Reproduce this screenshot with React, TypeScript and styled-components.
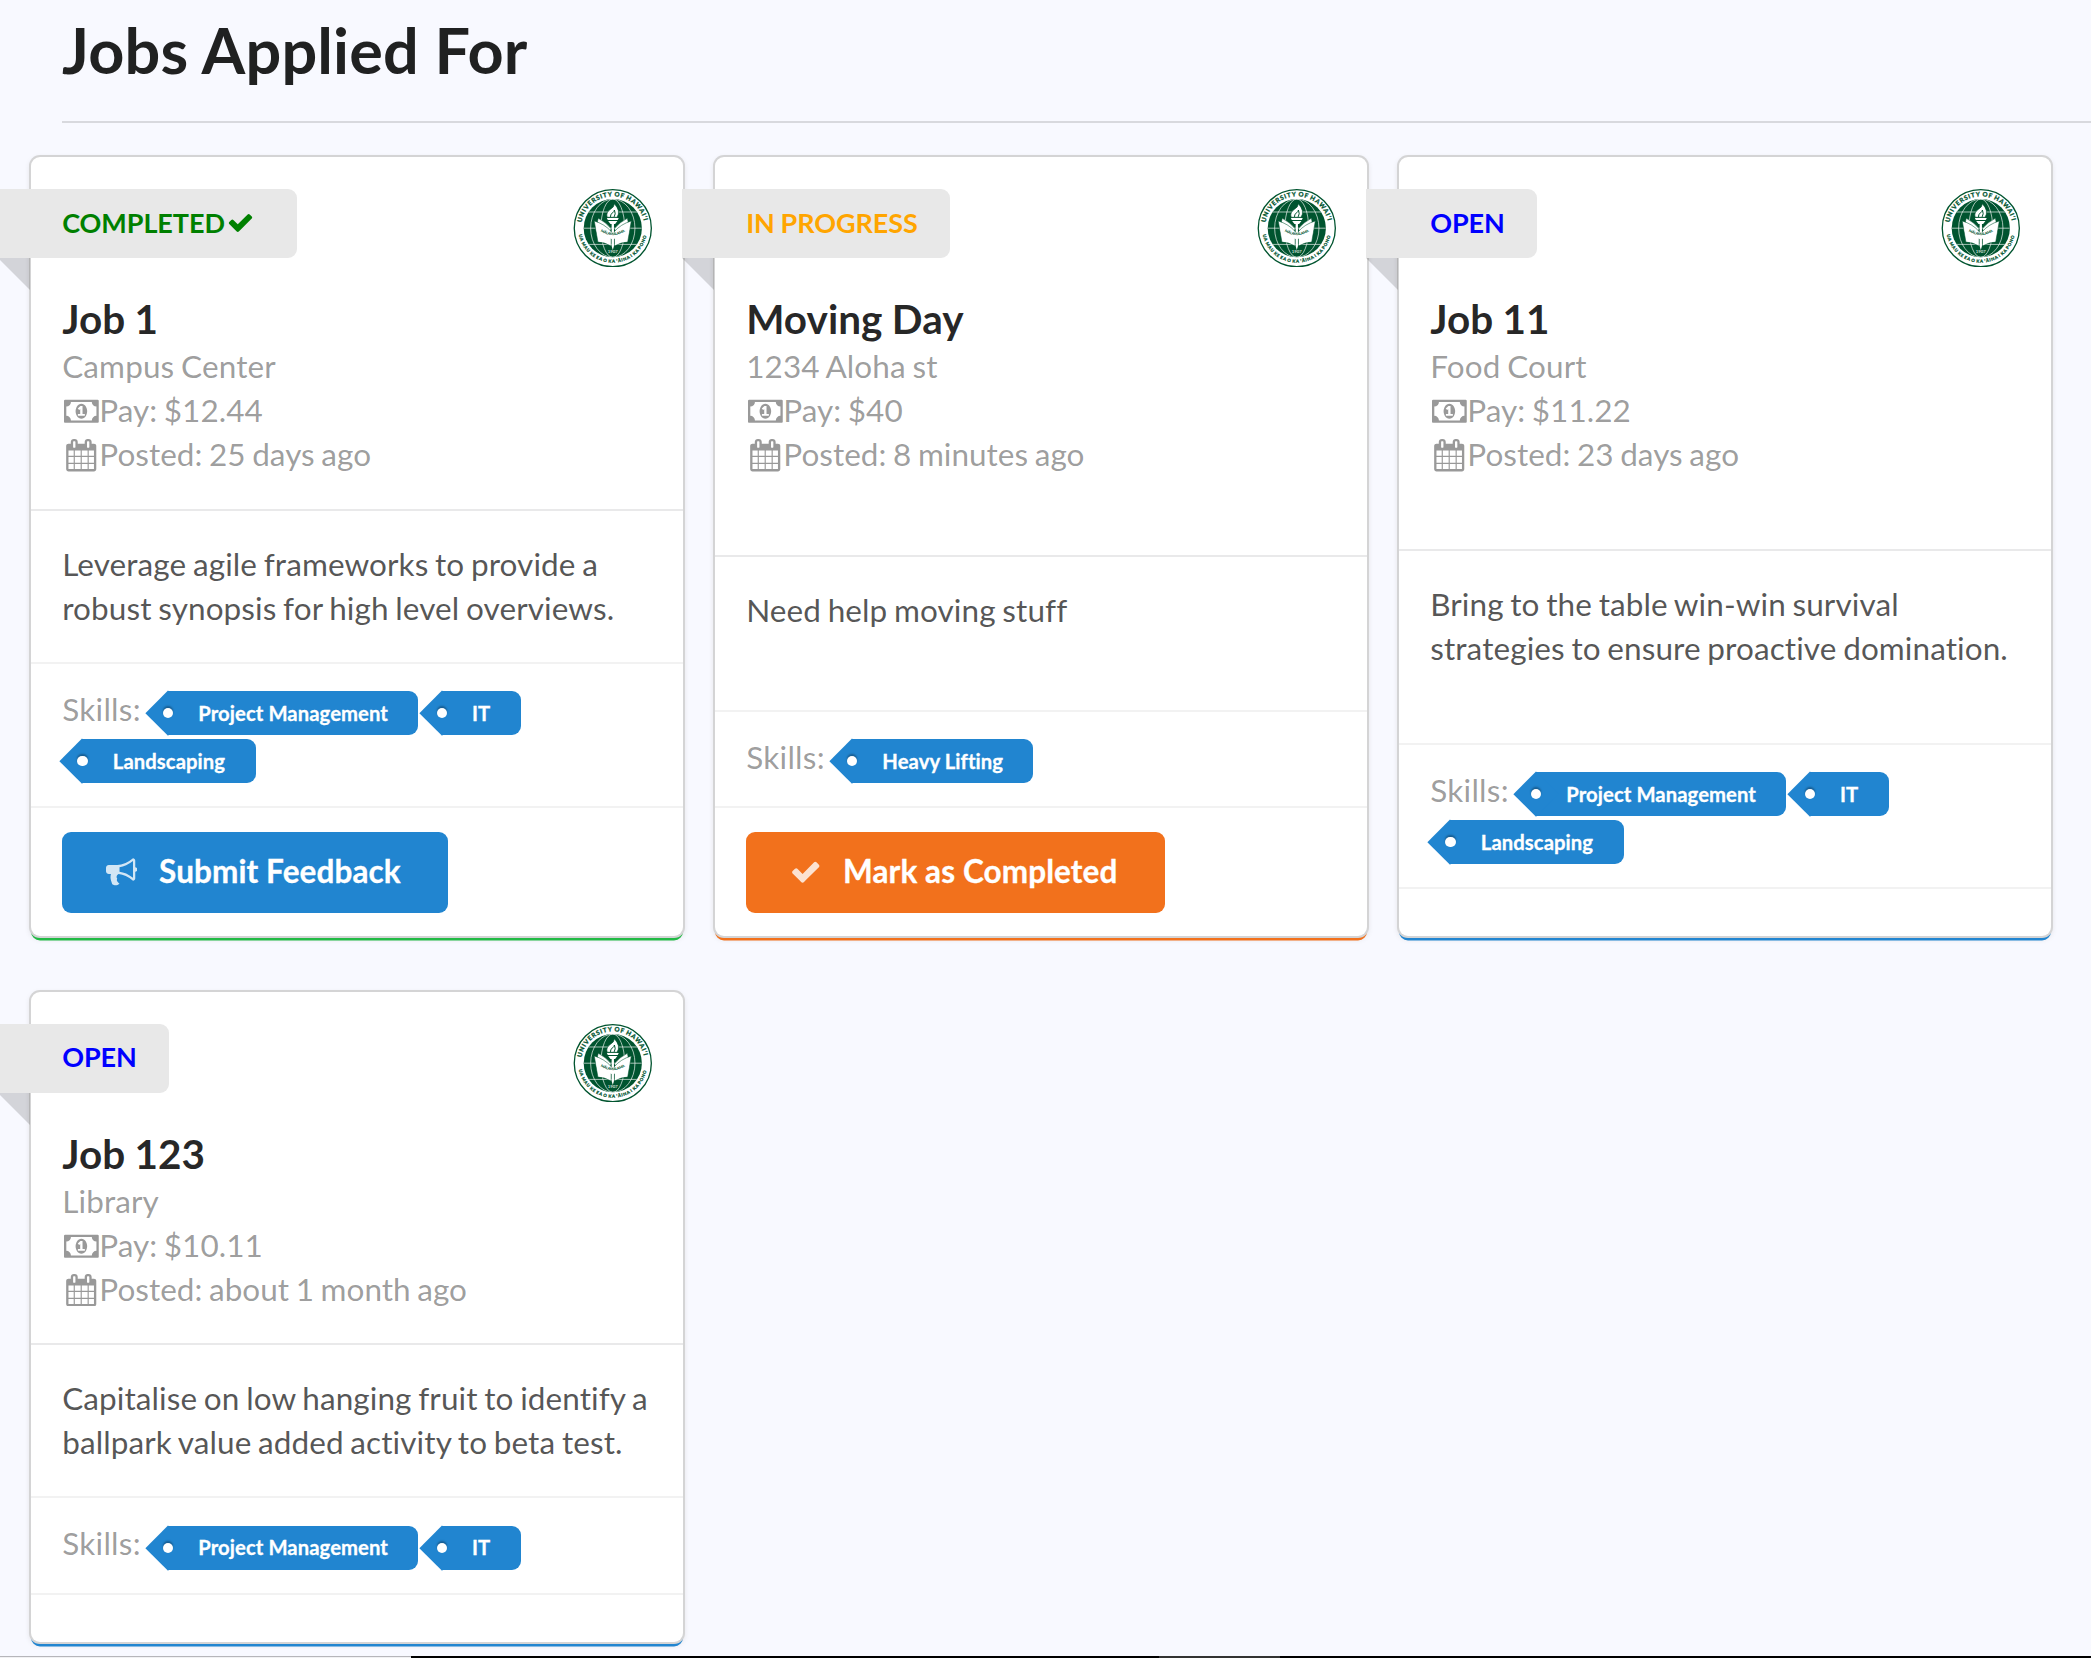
import React from "react";
import styled, { createGlobalStyle } from "styled-components";

const GlobalStyle = createGlobalStyle`
  *, *::before, *::after { box-sizing: border-box; }
  html, body { margin: 0; padding: 0; }
  body {
    background: #f8f9ff;
    font-family: Lato, "Open Sans", sans-serif;
    font-size: 31.5px;
    line-height: 44px;
    letter-spacing: 0.02px;
    word-spacing: -1.5px;
    font-variant-ligatures: none;
    color: rgba(0, 0, 0, 0.87);
    overflow: hidden;
  }
`;

const Page = styled.div`
  display: flex;
  flex-direction: column;
  height: 1658px;
  overflow: hidden;
`;

const PageHeader = styled.header`
  margin-left: 62px;
  padding: 9px 0 31px;
  border-bottom: 2px solid #d8d9de;
`;

const Title = styled.h1`
  margin: 0;
  font-size: 63px;
  line-height: 81px;
  font-weight: 700;
  letter-spacing: 0.15px;
  word-spacing: 0;
`;

const Cards = styled.main`
  display: grid;
  grid-template-columns: repeat(3, 652.5px);
  column-gap: 31.5px;
  row-gap: 55.1px;
  padding: 34px 0 0 30.7px;
`;

const CardBox = styled.article<{ $accent: string }>`
  display: flex;
  flex-direction: column;
  background: #fff;
  border-radius: 9px;
  box-shadow: 0 0 0 2px #d4d4d5, 0 4.5px 0 0 ${(p) => p.$accent}, 0 2px 6px 0 #d4d4d5;
`;

const Section = styled.section`
  flex: 1 1 auto;
  padding: 32px 31.5px 32.2px;

  & + & {
    border-top: 2px solid #e9e9ea;
    padding: 31px 31.5px 32.3px;
  }
`;

const Extra = styled.footer`
  border-top: 2px solid #f2f2f2;
  padding: 23.6px 31.5px;
`;

const SkillsExtra = styled(Extra)`
  padding: 23px 31.5px 23.3px;
  color: rgba(0, 0, 0, 0.4);
`;

const SkillsLabel = styled.span`
  letter-spacing: 0.27px;
`;

const TopRow = styled.div`
  display: flex;
  justify-content: space-between;
  align-items: flex-start;
  height: 104px;
`;

const Ribbon = styled.div<{ $color: string }>`
  position: relative;
  display: flex;
  align-items: center;
  height: 69px;
  margin-left: -63.9px;
  padding: 0 32.4px 1.6px 63.9px;
  border-radius: 0 9px 9px 0;
  background: #e8e8e8;
  color: ${(p) => p.$color};
  font-size: 27px;
  line-height: 38px;
  font-weight: 700;
  letter-spacing: -0.07px;
  word-spacing: -0.8px;
  white-space: nowrap;

  &::after {
    content: "";
    position: absolute;
    top: 100%;
    left: 0;
    border-style: solid;
    border-width: 0 32.4px 32.4px 0;
    border-color: transparent rgba(0, 0, 0, 0.15) transparent transparent;
  }
`;

const JobName = styled.h2`
  margin: 0;
  font-size: 40.5px;
  line-height: 52px;
  font-weight: 700;
  word-spacing: -0.5px;
  color: rgba(0, 0, 0, 0.85);
`;

const Meta = styled.div`
  display: flex;
  align-items: center;
  height: 44px;
  color: rgba(0, 0, 0, 0.4);
`;

const Place = styled(Meta)`
  margin-top: -0.6px;
  letter-spacing: 0.12px;
`;

const Description = styled.p`
  margin: 0;
  letter-spacing: 0.09px;
  color: rgba(0, 0, 0, 0.68);
`;

const IconSlot = styled.span<{ $right?: number; $left?: number; $opacity?: number }>`
  display: inline-flex;
  justify-content: center;
  width: 1.18em;
  margin-left: ${(p) => p.$left ?? 0}px;
  margin-right: ${(p) => p.$right ?? 0}px;
  opacity: ${(p) => p.$opacity ?? 1};

  svg {
    display: block;
    height: 1em;
    flex: none;
    fill: currentColor;
  }
`;

const MetaIcon = styled(IconSlot)`
  margin: 2px -0.6px 0 0.6px;

  svg {
    height: 1.03em;
  }
`;

const Tag = styled.span`
  position: relative;
  display: inline-block;
  margin: 0 2.9px 0 20.25px;
  padding: 11.8px 30.4px;
  border-radius: 0 9px 9px 0;
  background: #2185d0;
  color: #fff;
  font-size: 20.25px;
  line-height: 20.25px;
  font-weight: 700;
  letter-spacing: 0.08px;
  word-spacing: 0;
  -webkit-text-stroke: 0.3px #fff;
  white-space: nowrap;

  &::before {
    content: "";
    position: absolute;
    top: 50%;
    left: 0;
    width: 31.7px;
    height: 31.7px;
    background: inherit;
    transform: translate(-50%, -50%) rotate(45deg);
  }

  &::after {
    content: "";
    position: absolute;
    top: 50%;
    left: -5px;
    width: 10.1px;
    height: 10.1px;
    margin-top: -5px;
    border-radius: 50%;
    background: #fff;
    box-shadow: 0 -2px 2px 0 rgba(0, 0, 0, 0.3);
  }
`;

const ActionButton = styled.button<{ $color: string }>`
  display: flex;
  align-items: center;
  height: 81px;
  padding: 0 47.25px 1px;
  border: 0;
  border-radius: 9px;
  background: ${(p) => p.$color};
  color: #fff;
  font: 700 31.5px/31.5px Lato, sans-serif;
  letter-spacing: 0.1px;
  -webkit-text-stroke: 0.3px #fff;
  white-space: nowrap;
`;

const BottomEdge = styled.div`
  display: grid;
  grid-template-columns: 411px 748px 121px 1fr;
  height: 2px;
  margin-top: auto;
`;

const EdgePart = styled.div<{ $top: string; $bottom: string }>`
  border-top: 1px solid ${(p) => p.$top};
  background: ${(p) => p.$bottom};
`;

const Seal = styled.svg`
  flex: none;
  width: 79.6px;
  height: 78.4px;
  margin-right: -0.6px;
  font-family: Lato, sans-serif;
  font-weight: 900;
`;

const MoneyIcon = () => (
  <svg viewBox="0 0 1920 1792">
    <path d="M768 1152h384v-96h-128v-448h-114l-148 137 77 80q42-37 55-57h2v288h-128v96zm512-256q0 70-21 142t-59.5 134-101.5 101-138 39-138-39-101.5-101-59.5-134-21-142 21-142 59.5-134 101.5-101 138-39 138 39 101.5 101 59.5 134 21 142zm512 256v-512q-106 0-181-75t-75-181h-1152q0 106-75 181t-181 75v512q106 0 181 75t75 181h1152q0-106 75-181t181-75zm128-832v1152q0 26-19 45t-45 19h-1792q-26 0-45-19t-19-45v-1152q0-26 19-45t45-19h1792q26 0 45 19t19 45z" />
  </svg>
);

const CalendarIcon = () => (
  <svg viewBox="0 0 1792 1792">
    <path d="M192 1664h288v-288h-288v288zm352 0h320v-288h-320v288zm-352-352h288v-320h-288v320zm352 0h320v-320h-320v320zm-352-384h288v-288h-288v288zm736 736h320v-288h-320v288zm-384-736h320v-288h-320v288zm768 736h288v-288h-288v288zm-384-352h320v-320h-320v320zm-352-864v-288q0-13-9.5-22.5t-22.5-9.5h-64q-13 0-22.5 9.5t-9.5 22.5v288q0 13 9.5 22.5t22.5 9.5h64q13 0 22.5-9.5t9.5-22.5zm736 864h288v-320h-288v320zm-384-384h320v-288h-320v288zm384 0h288v-288h-288v288zm32-480v-288q0-13-9.5-22.5t-22.5-9.5h-64q-13 0-22.5 9.5t-9.5 22.5v288q0 13 9.5 22.5t22.5 9.5h64q13 0 22.5-9.5t9.5-22.5zm384-64v1280q0 52-38 90t-90 38h-1408q-52 0-90-38t-38-90v-1280q0-52 38-90t90-38h128v-96q0-66 47-113t113-47h64q66 0 113 47t47 113v96h384v-96q0-66 47-113t113-47h64q66 0 113 47t47 113v96h128q52 0 90 38t38 90z" />
  </svg>
);

const CheckIcon = () => (
  <svg viewBox="0 0 1792 1792">
    <path d="M1671 566q0 40-28 68l-724 724-136 136q-28 28-68 28t-68-28l-136-136-362-362q-28-28-28-68t28-68l136-136q28-28 68-28t68 28l294 295 656-657q28-28 68-28t68 28l136 136q28 28 28 68z" />
  </svg>
);

const BullhornIcon = () => (
  <svg viewBox="0 0 1792 1792">
    <path d="M1664 640q53 0 90.5 37.5t37.5 90.5-37.5 90.5-90.5 37.5v384q0 52-38 90t-90 38q-417-347-812-380-58 19-91 66t-31 100.5 40 92.5q-20 33-23 65.5t6 58 33.5 55 48 50 61.5 50.5q-29 58-111.5 83t-168.5 11.5-132-55.5q-7-23-29.5-87.5t-32-94.5-23-89-15-101 3.5-98.5 22-110.5h-122q-66 0-113-47t-47-113v-192q0-66 47-113t113-47h480q435 0 896-384 52 0 90 38t38 90v384zm-128 604v-954q-394 302-768 343v270q377 42 768 341z" />
  </svg>
);

const GREEN = "#00542f";

const UniversitySeal = ({ id }: { id: string }) => (
  <Seal viewBox="-120 -118.5 240 237">
    <defs>
      <path id={`${id}-top`} d="M-94.5 -17A96 96 0 0 1 94.5 -17" />
      <path id={`${id}-bottom`} d="M-102.5 20A104.4 104.4 0 0 0 102.5 20" />
      <path id={`${id}-motto`} d="M-37 10Q0 32 37 10" />
      <clipPath id={`${id}-globe`}>
        <circle r="88" />
      </clipPath>
    </defs>
    <circle r="116.5" fill="#fff" stroke={GREEN} strokeWidth="4" />
    <circle r="88" fill={GREEN} />
    <g clipPath={`url(#${id}-globe)`} fill="none" stroke="#fff" strokeOpacity="0.75" strokeWidth="2.6">
      <path d="M-88 0H88M-76 -49H76M-76 49H76" />
      <ellipse rx="36" ry="88" />
      <ellipse rx="67" ry="88" />
    </g>
    <path
      d="M-17 -33Q-22 -48 -6 -58Q4 -64 5 -74Q15 -62 17 -53Q19 -42 13 -33Z"
      fill="#fff"
      stroke={GREEN}
      strokeWidth="2"
    />
    <path d="M-7 -34Q-8 -43 0 -47Q4 -50 5 -55Q10 -43 4 -34" fill="none" stroke={GREEN} strokeWidth="3" />
    <path d="M-18 -31H18L15 -25H-15ZM-14 -22H14L7 -13H-7Z" fill="#fff" />
    <g fill="#fff" stroke={GREEN} strokeWidth="1.6">
      <path d="M-44 -30Q-20 -18 -5 2L-9 10Q-28 -8 -47 -17Z" />
      <path d="M44 -30Q20 -18 5 2L9 10Q28 -8 47 -17Z" />
      <path d="M-56 -22Q-24 -12 -5 10V54Q-26 42 -45 42Z" />
      <path d="M56 -22Q24 -12 5 10V54Q26 42 45 42Z" />
    </g>
    <path d="M-3.5 -13H3.5V54L0 66L-3.5 54Z" fill="#fff" />
    <path d="M-50 2Q-28 6 0 14Q28 6 50 2L45 24Q20 24 0 34Q-20 24 -45 24Z" fill="#fff" />
    <g fill={GREEN} stroke={GREEN} strokeWidth="0.7">
      <text fontSize="19">
        <textPath href={`#${id}-top`} textLength="262">
          UNIVERSITY OF HAWAIʻI
        </textPath>
      </text>
      <text fontSize="13">
        <textPath href={`#${id}-bottom`} textLength="284">
          UA MAU KE EA O KA ʻĀINA I KA PONO
        </textPath>
      </text>
    </g>
    <text fontSize="11" fill={GREEN}>
      <textPath href={`#${id}-motto`} textLength="78">
        MĀLAMALAMA
      </textPath>
    </text>
    <text y="76" fontSize="13" textAnchor="middle" fill="#fff" fillOpacity="0.75">
      1907
    </text>
  </Seal>
);

type Status = "COMPLETED" | "IN PROGRESS" | "OPEN";

interface Job {
  id: string;
  status: Status;
  name: string;
  place: string;
  pay: string;
  posted: string;
  description: string;
  skills: string[];
}

const STATUS: Record<Status, { text: string; accent: string }> = {
  COMPLETED: { text: "green", accent: "#21ba45" },
  "IN PROGRESS": { text: "orange", accent: "#f2711c" },
  OPEN: { text: "blue", accent: "#2185d0" },
};

const JOBS: Job[] = [
  {
    id: "job-1",
    status: "COMPLETED",
    name: "Job 1",
    place: "Campus Center",
    pay: "$12.44",
    posted: "25 days ago",
    description: "Leverage agile frameworks to provide a robust synopsis for high level overviews.",
    skills: ["Project Management", "IT", "Landscaping"],
  },
  {
    id: "moving-day",
    status: "IN PROGRESS",
    name: "Moving Day",
    place: "1234 Aloha st",
    pay: "$40",
    posted: "8 minutes ago",
    description: "Need help moving stuff",
    skills: ["Heavy Lifting"],
  },
  {
    id: "job-11",
    status: "OPEN",
    name: "Job 11",
    place: "Food Court",
    pay: "$11.22",
    posted: "23 days ago",
    description: "Bring to the table win-win survival strategies to ensure proactive domination.",
    skills: ["Project Management", "IT", "Landscaping"],
  },
  {
    id: "job-123",
    status: "OPEN",
    name: "Job 123",
    place: "Library",
    pay: "$10.11",
    posted: "about 1 month ago",
    description: "Capitalise on low hanging fruit to identify a ballpark value added activity to beta test.",
    skills: ["Project Management", "IT"],
  },
];

const JobAction = ({ status }: { status: Status }) => {
  if (status === "COMPLETED") {
    return (
      <ActionButton $color="#2185d0">
        <IconSlot $left={-6.75} $right={19.2} $opacity={0.8}>
          <BullhornIcon />
        </IconSlot>
        Submit Feedback
      </ActionButton>
    );
  }
  if (status === "IN PROGRESS") {
    return (
      <ActionButton $color="#f2711c">
        <IconSlot $left={-6.75} $right={19.2} $opacity={0.8}>
          <CheckIcon />
        </IconSlot>
        Mark as Completed
      </ActionButton>
    );
  }
  return null;
};

const JobCard = ({ job }: { job: Job }) => (
  <CardBox $accent={STATUS[job.status].accent}>
    <Section>
      <TopRow>
        <Ribbon $color={STATUS[job.status].text}>
          {job.status}
          {job.status === "COMPLETED" && (
            <IconSlot $right={7.9}>
              <CheckIcon />
            </IconSlot>
          )}
        </Ribbon>
        <UniversitySeal id={job.id} />
      </TopRow>
      <JobName>{job.name}</JobName>
      <Place>{job.place}</Place>
      <Meta>
        <MetaIcon>
          <MoneyIcon />
        </MetaIcon>
        Pay: {job.pay}
      </Meta>
      <Meta>
        <MetaIcon>
          <CalendarIcon />
        </MetaIcon>
        Posted: {job.posted}
      </Meta>
    </Section>
    <Section>
      <Description>{job.description}</Description>
    </Section>
    <SkillsExtra>
      <SkillsLabel>Skills: </SkillsLabel>
      {job.skills.map((skill) => (
        <React.Fragment key={skill}>
          <Tag>{skill}</Tag>
          <wbr />
        </React.Fragment>
      ))}
    </SkillsExtra>
    <Extra>
      <JobAction status={job.status} />
    </Extra>
  </CardBox>
);

export default function App() {
  return (
    <Page>
      <GlobalStyle />
      <PageHeader>
        <Title>Jobs Applied For</Title>
      </PageHeader>
      <Cards>
        {JOBS.map((job) => (
          <JobCard key={job.id} job={job} />
        ))}
      </Cards>
      <BottomEdge>
        <EdgePart $top="#b6b6ba" $bottom="#f1f1f3" />
        <EdgePart $top="#000" $bottom="#000" />
        <EdgePart $top="#333" $bottom="#333" />
        <EdgePart $top="#000" $bottom="#000" />
      </BottomEdge>
    </Page>
  );
}
